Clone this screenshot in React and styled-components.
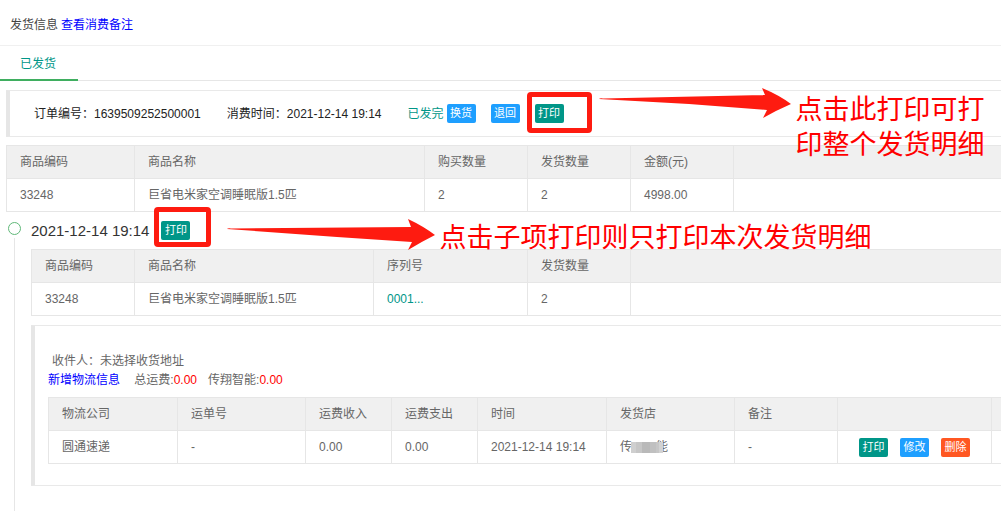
import React from "react";
import styled, { createGlobalStyle } from "styled-components";

const GlobalStyle = createGlobalStyle`
  * { box-sizing: border-box; }
  body {
    margin: 0;
    background: #fff;
    color: #666;
    font-family: "Liberation Sans", "Noto Sans CJK SC", sans-serif;
    font-size: 12px;
    line-height: 18px;
    overflow-x: hidden;
  }
`;

const Page = styled.main`
  padding-bottom: 10px;
  overflow: hidden;
`;

const Header = styled.header`
  display: flex;
  align-items: center;
  gap: 3px;
  height: 46px;
  padding: 4px 10px 0;
  border-bottom: 1px solid #f0f0f0;
  color: #444;
`;

const Link = styled.a`
  color: ${(p) => p.$color || "#00f"};
  text-decoration: none;
`;

const TabBar = styled.nav`
  display: flex;
  height: 35px;
  border-bottom: 1px solid #e6e6e6;
`;

const Tab = styled.button`
  height: 35px;
  padding: 2px 22px 0 20px;
  border: 0;
  border-bottom: 2px solid #3fae60;
  background: none;
  color: #009688;
  font: inherit;
`;

const Quote = styled.section`
  border: 1px solid #e9e9e9;
  border-left: 4px solid #e6e6e6;
  border-right: 0;
`;

const OrderBar = styled(Quote)`
  display: flex;
  align-items: center;
  gap: 26px;
  height: 47px;
  margin: 9px 0 8px 6px;
  padding-left: 24px;
  color: #222;
`;

const Actions = styled.div`
  display: flex;
  align-items: center;
  gap: ${(p) => p.$gap}px;
  padding-left: ${(p) => p.$indent || 0}px;
`;

const Status = styled.div`
  display: flex;
  align-items: center;
  gap: 3px;
  color: #009688;
`;

const tones = { green: "#009688", blue: "#1e9fff", red: "#ff5722" };

const SmallButton = styled.button`
  display: block;
  width: 29px;
  height: 19px;
  padding: 0;
  border: 0;
  border-radius: 2px;
  background: ${(p) => tones[p.$tone]};
  color: #fff;
  font: inherit;
  font-size: 11px;
  line-height: 19px;
  text-align: center;
`;

const Table = styled.table`
  width: 100%;
  table-layout: fixed;
  border-collapse: collapse;
`;

const cell = `
  height: 33px;
  padding: 0 13px;
  border: 1px solid #e6e6e6;
  font-weight: normal;
  text-align: left;
  white-space: nowrap;
  &:last-child { border-right: 0; }
`;
const Th = styled.th`
  ${cell}
  background: #f0f0f0;
`;
const Td = styled.td`
  ${cell}
`;

const OrderTable = styled.div`
  margin-left: 6px;
`;

const Timeline = styled.div`
  display: grid;
  grid-template-columns: 31px minmax(0, 1fr);
`;

const Rail = styled.div`
  display: flex;
  flex-direction: column;
  align-items: center;
  gap: 3px;
  width: 13px;
  margin-left: 8px;
  padding-top: 10px;
`;

const Dot = styled.span`
  width: 13px;
  height: 13px;
  border: 1px solid #5fb878;
  border-radius: 50%;
`;

const Line = styled.span`
  flex: 1;
  width: 1px;
  background: #e6e6e6;
`;

const Entry = styled.article`
  padding-bottom: 25px;
`;

const EntryHead = styled.div`
  display: flex;
  align-items: center;
  gap: 12px;
  height: 37px;
`;

const EntryTitle = styled.h3`
  margin: 0;
  color: #333;
  font-size: 15px;
  font-weight: normal;
`;

const Shipping = styled(Quote)`
  margin-top: 9px;
  padding: 26px 0 21px 13px;
`;

const Receiver = styled.p`
  margin: 0;
  padding-left: 4px;
  line-height: 19px;
`;

const Fees = styled.div`
  display: flex;
  gap: 11px;
  margin-bottom: 7px;
  line-height: 19px;
`;

const Amount = styled.span`
  color: #f00;
`;

const Mosaic = styled.svg`
  position: relative;
  margin: 0 -7px 0 -1px;
  vertical-align: -2px;
`;

const Annotated = styled.div`
  position: relative;
  z-index: 2;
`;

const Frame = styled.span`
  position: absolute;
  top: ${(p) => p.$top}px;
  left: ${(p) => p.$left}px;
  width: ${(p) => p.$width}px;
  height: ${(p) => p.$height}px;
  border: 5px solid #fe1b10;
  border-radius: 4px;
  pointer-events: none;
`;

const Arrow = styled.svg`
  position: absolute;
  top: ${(p) => p.$top}px;
  left: ${(p) => p.$left}px;
  fill: #fe1b10;
`;

const Note = styled.div`
  position: absolute;
  top: ${(p) => p.$top}px;
  left: ${(p) => p.$left}px;
  width: ${(p) => p.$width}px;
  color: #f00;
  font-size: 27px;
  line-height: 35px;
`;

function DataTable({ widths, heads, cells }) {
  return (
    <Table>
      <colgroup>
        {widths.map((w, i) => (
          <col key={i} width={w} />
        ))}
        <col />
      </colgroup>
      <thead>
        <tr>
          {heads.map((h, i) => (
            <Th key={i} scope="col">{h}</Th>
          ))}
        </tr>
      </thead>
      <tbody>
        <tr>
          {cells.map((c, i) => (
            <Td key={i}>{c}</Td>
          ))}
        </tr>
      </tbody>
    </Table>
  );
}

function MaskedShop() {
  return (
    <>
      传
      <Mosaic width="32" height="11" viewBox="0 0 32 11" aria-hidden="true">
        <rect width="32" height="11" fill="#c6c6c6" />
        <rect width="5" height="11" fill="#cfcfcf" />
        <rect x="11" width="8" height="11" fill="#b9b9b9" />
        <rect x="19" width="6" height="11" fill="#c0c0c0" />
        <rect x="28" width="4" height="11" fill="#d2d2d2" />
      </Mosaic>
      能
    </>
  );
}

export default function App() {
  return (
    <>
      <GlobalStyle />
      <Page>
        <Header>
          <span>发货信息</span>
          <Link href="#remarks">查看消费备注</Link>
        </Header>
        <TabBar>
          <Tab type="button">已发货</Tab>
        </TabBar>

        <OrderBar>
          <span>订单编号：1639509252500001</span>
          <span>消费时间：2021-12-14 19:14</span>
          <Actions $gap={15}>
            <Status>
              <span>已发完</span>
              <SmallButton $tone="blue">换货</SmallButton>
            </Status>
            <SmallButton $tone="blue">退回</SmallButton>
            <Annotated>
              <SmallButton $tone="green">打印</SmallButton>
              <Frame $top={-12} $left={-8} $width={65} $height={41} />
              <Arrow $top={-17} $left={64} width="194" height="32" viewBox="0 0 194 32">
                <path d="M0 12 Q1 11 4 11.500 L166 8 L163 1 Q180 8 192 17 Q178 23 164 31 L168 23 L90 17 Z" />
              </Arrow>
              <Note $top={-11} $left={261} $width={200}>点击此打印可打印整个发货明细</Note>
            </Annotated>
          </Actions>
        </OrderBar>

        <OrderTable>
          <DataTable
            widths={[128, 290, 103, 103, 103]}
            heads={["商品编码", "商品名称", "购买数量", "发货数量", "金额(元)", ""]}
            cells={["33248", "巨省电米家空调睡眠版1.5匹", "2", "2", "4998.00", ""]}
          />
        </OrderTable>

        <Timeline>
          <Rail>
            <Dot />
            <Line />
          </Rail>
          <Entry>
            <EntryHead>
              <EntryTitle>2021-12-14 19:14</EntryTitle>
              <Annotated>
                <SmallButton $tone="green">打印</SmallButton>
                <Frame $top={-14} $left={-7} $width={57} $height={40} />
                <Arrow $top={-3} $left={66} width="210" height="34" viewBox="0 0 210 34">
                  <path d="M0 11 Q1 10 4 10.500 L184 9 L181 1 Q196 8 208 17 Q194 24 181 32 L185 24 L110 19 Z" />
                </Arrow>
                <Note $top={0} $left={278} $width={440}>点击子项打印则只打印本次发货明细</Note>
              </Annotated>
            </EntryHead>
            <DataTable
              widths={[103, 239, 154, 103]}
              heads={["商品编码", "商品名称", "序列号", "发货数量", ""]}
              cells={[
                "33248",
                "巨省电米家空调睡眠版1.5匹",
                <Link href="#serial" $color="#009688">0001...</Link>,
                "2",
                "",
              ]}
            />
            <Shipping>
              <Receiver>收件人：未选择收货地址</Receiver>
              <Fees>
                <Link href="#logistics">新增物流信息</Link>
                <span>&nbsp;总运费:<Amount>0.00</Amount></span>
                <span>传翔智能:<Amount>0.00</Amount></span>
              </Fees>
              <DataTable
                widths={[129, 128, 86, 86, 129, 128, 103, 154]}
                heads={["物流公司", "运单号", "运费收入", "运费支出", "时间", "发货店", "备注", "", ""]}
                cells={[
                  "圆通速递",
                  "-",
                  "0.00",
                  "0.00",
                  "2021-12-14 19:14",
                  <MaskedShop />,
                  "-",
                  <Actions $gap={12} $indent={8}>
                    <SmallButton $tone="green">打印</SmallButton>
                    <SmallButton $tone="blue">修改</SmallButton>
                    <SmallButton $tone="red">删除</SmallButton>
                  </Actions>,
                  "",
                ]}
              />
            </Shipping>
          </Entry>
        </Timeline>
      </Page>
    </>
  );
}
